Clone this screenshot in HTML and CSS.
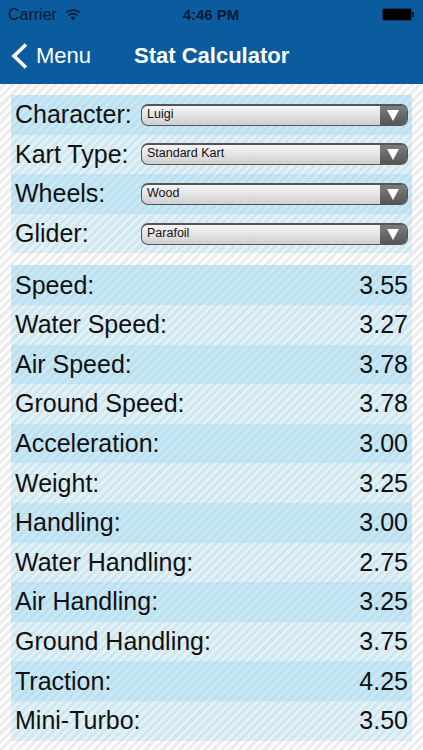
FILE: index.html
```html
<!DOCTYPE html>
<html>

<head>
  <meta charset="utf-8">
  <meta name="viewport" content="width=device-width, initial-scale=1.0">
  <title>Stat Calculator</title>
  <link rel="stylesheet" href="styles.css">
</head>

<body>
  <div id="header">
    <div class="status_bar">
      <div class="status_left">
        <span>Carrier</span>
        <svg class="wifi" width="16" height="12" viewBox="0 0 16 12">
          <path d="M8 11.5 L5.6 8.6 A3.6 3.6 0 0 1 10.4 8.6 Z" fill="#061a33"/>
          <path d="M3.7 6.4 A6.3 6.3 0 0 1 12.3 6.4" fill="none" stroke="#061a33" stroke-width="1.8"/>
          <path d="M1.2 3.7 A10 10 0 0 1 14.8 3.7" fill="none" stroke="#061a33" stroke-width="1.8"/>
        </svg>
      </div>
      <div class="status_time">4:46 PM</div>
      <div class="status_right">
        <div class="battery"></div>
        <div class="battery_tip"></div>
      </div>
    </div>
    <div class="nav_bar">
      <div class="nav_back">
        <svg width="17" height="26" viewBox="0 0 17 26">
          <path d="M15 1.5 L3 13 L15 24.5" fill="none" stroke="#fff" stroke-width="3.6"/>
        </svg>
        <span>Menu</span>
      </div>
      <div class="nav_title">Stat Calculator</div>
    </div>
  </div>

  <div id="content">
    <div class="panel">
      <div class="row">
        <div class="pick_label">Character:</div>
        <div class="picker">
          <div class="picker_text">Luigi</div>
          <div class="picker_arrow"></div>
        </div>
      </div>
      <div class="row">
        <div class="pick_label">Kart Type:</div>
        <div class="picker">
          <div class="picker_text">Standard Kart</div>
          <div class="picker_arrow"></div>
        </div>
      </div>
      <div class="row">
        <div class="pick_label">Wheels:</div>
        <div class="picker">
          <div class="picker_text">Wood</div>
          <div class="picker_arrow"></div>
        </div>
      </div>
      <div class="row">
        <div class="pick_label">Glider:</div>
        <div class="picker">
          <div class="picker_text">Parafoil</div>
          <div class="picker_arrow"></div>
        </div>
      </div>
    </div>

    <div class="panel">
      <div class="row"><span>Speed:</span><span>3.55</span></div>
      <div class="row"><span>Water Speed:</span><span>3.27</span></div>
      <div class="row"><span>Air Speed:</span><span>3.78</span></div>
      <div class="row"><span>Ground Speed:</span><span>3.78</span></div>
      <div class="row"><span>Acceleration:</span><span>3.00</span></div>
      <div class="row"><span>Weight:</span><span>3.25</span></div>
      <div class="row"><span>Handling:</span><span>3.00</span></div>
      <div class="row"><span>Water Handling:</span><span>2.75</span></div>
      <div class="row"><span>Air Handling:</span><span>3.25</span></div>
      <div class="row"><span>Ground Handling:</span><span>3.75</span></div>
      <div class="row"><span>Traction:</span><span>4.25</span></div>
      <div class="row"><span>Mini-Turbo:</span><span>3.50</span></div>
    </div>
  </div>
</body>

</html>
```

FILE: styles.css
```css
* {
  box-sizing: border-box;
}

html,
body {
  height: 100%;
}

body {
  margin: 0;
  padding: 0;
  overflow: hidden;
  font-family: "Liberation Sans", Arial, sans-serif;
  color: #111;
  background: repeating-linear-gradient(-45deg, #fdfdfd 0, #fdfdfd 3px, #ececec 3px, #ececec 6px);
}

#header {
  height: 84px;
  background-color: #0a5c9e;
}

.status_bar {
  display: flex;
  align-items: center;
  justify-content: space-between;
  height: 28px;
  padding: 1px 9px 0 8px;
  color: #061a33;
}

.status_left {
  display: flex;
  align-items: center;
  gap: 8px;
  width: 120px;
  font-size: 16px;
}

.status_time {
  font-size: 15px;
  font-weight: bold;
}

.status_right {
  display: flex;
  align-items: center;
  justify-content: flex-end;
  width: 120px;
  padding-bottom: 1px;
}

.battery {
  width: 30px;
  height: 13px;
  border: 1px solid #0a3a66;
  border-radius: 2px;
  background-color: #000;
}

.battery_tip {
  width: 2px;
  height: 5px;
  background-color: #061a33;
}

.nav_bar {
  display: flex;
  align-items: center;
  height: 56px;
  padding-left: 11px;
  color: #fff;
}

.nav_back {
  display: flex;
  align-items: center;
  gap: 8px;
  width: 123px;
  font-size: 22px;
}

.nav_title {
  font-size: 22px;
  font-weight: bold;
}

#content {
  display: flex;
  flex-direction: column;
  gap: 12px;
  padding: 11px 11px 0;
}

.row {
  display: flex;
  align-items: center;
  justify-content: space-between;
  height: 39.6px;
  padding: 0 4px;
  font-size: 25px;
  background-color: rgba(150, 215, 240, 0.28);
}

.row:nth-child(odd) {
  background-color: rgba(140, 210, 238, 0.48);
}

.pick_label {
  width: 126px;
  white-space: nowrap;
}

.picker {
  display: flex;
  flex: 1;
  height: 22px;
  overflow: hidden;
  border: 1px solid #555;
  border-top-width: 2px;
  border-radius: 7px;
  background: linear-gradient(#f6f6f6, #cfcfd1);
}

.picker_text {
  flex: 1;
  padding-left: 5px;
  font-size: 12.5px;
  line-height: 16px;
}

.picker_arrow {
  position: relative;
  width: 27px;
  background: linear-gradient(#7d7d7d, #555);
}

/* white triangle on the dark end of the picker */
.picker_arrow::after {
  content: "";
  position: absolute;
  top: 4px;
  left: 7px;
  border-top: 11px solid #fff;
  border-left: 6px solid transparent;
  border-right: 6px solid transparent;
}
```
